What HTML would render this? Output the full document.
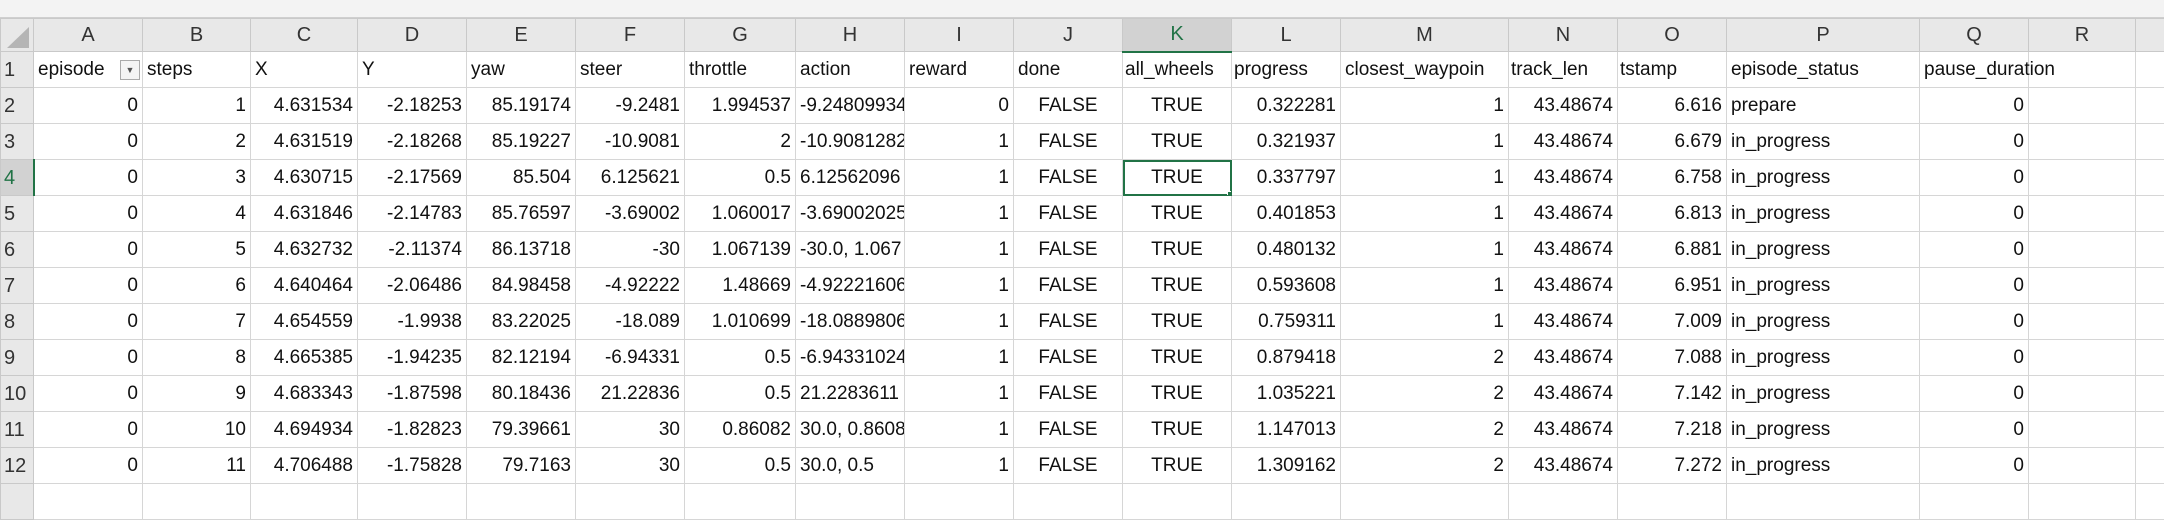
<!DOCTYPE html>
<html><head><meta charset="utf-8"><style>
html,body{margin:0;padding:0;width:2164px;height:490px;overflow:hidden;background:#fff;font-family:"Liberation Sans","Noto Sans CJK JP",sans-serif;}
.top{position:absolute;left:0;top:0;width:2164px;height:18px;background:#f3f3f3;border-bottom:1px solid #cfcfcf;box-sizing:border-box}
table{position:absolute;left:0;top:18px;width:2164px;border-collapse:collapse;table-layout:fixed;font-size:19px;color:#111}
td{border:1px solid #d6d6d6;height:36px;padding:0 4px;white-space:nowrap;overflow:hidden;box-sizing:border-box;text-align:right;line-height:34px}
tr.h td{background:#e8e8e8;height:33px;text-align:center;font-size:20px;color:#333;border-color:#c9c9c9;line-height:31px}
td.n{background:#e8e8e8;text-align:left;padding-left:3px;font-size:20px;color:#333;border-color:#c9c9c9}
td.l{text-align:left}
td.c{text-align:center}
td.v{overflow:visible}
.sel{outline:2px solid #217346;outline-offset:-2px;position:relative}
</style></head><body>
<div class="top"></div>
<table>
<colgroup>
<col style="width:33px"><col style="width:109px"><col style="width:108px"><col style="width:107px"><col style="width:109px"><col style="width:109px"><col style="width:109px"><col style="width:111px"><col style="width:109px"><col style="width:109px"><col style="width:109px"><col style="width:109px"><col style="width:109px"><col style="width:168px"><col style="width:109px"><col style="width:109px"><col style="width:193px"><col style="width:109px"><col style="width:107px"><col style="width:29px">
</colgroup>
<tr class="h"><td style="position:relative;padding:0"><svg width="33" height="33" style="position:absolute;left:0;top:0"><polygon points="28,8 28,29 6,29" fill="#b5b5b5"/></svg></td><td>A</td><td>B</td><td>C</td><td>D</td><td>E</td><td>F</td><td>G</td><td>H</td><td>I</td><td>J</td><td style="background:#d2d2d2;color:#217346;border-bottom:2px solid #217346">K</td><td>L</td><td>M</td><td>N</td><td>O</td><td>P</td><td>Q</td><td>R</td><td style="border-right:none"></td></tr>
<tr><td class="n">1</td><td class="l" style="position:relative">episode<span style="position:absolute;right:2px;top:8px;width:20px;height:20px;border:1px solid #aaa;background:#f4f4f4;box-sizing:border-box;font-size:9px;line-height:18px;text-align:center;color:#555">▼</span></td><td class="l">steps</td><td class="l">X</td><td class="l">Y</td><td class="l">yaw</td><td class="l">steer</td><td class="l">throttle</td><td class="l">action</td><td class="l">reward</td><td class="l">done</td><td class="l" style="padding-left:2px">all_wheels</td><td class="l" style="padding-left:2px">progress</td><td class="l">closest_waypoin</td><td class="l" style="padding-left:2px">track_len</td><td class="l" style="padding-left:2px">tstamp</td><td class="l">episode_status</td><td class="l v">pause_duration</td><td></td><td></td></tr>
<tr><td class="n">2</td><td>0</td><td>1</td><td>4.631534</td><td>-2.18253</td><td>85.19174</td><td>-9.2481</td><td>1.994537</td><td class="l">-9.24809934</td><td>0</td><td class="c">FALSE</td><td class="c">TRUE</td><td>0.322281</td><td>1</td><td>43.48674</td><td>6.616</td><td class="l">prepare</td><td>0</td><td></td><td></td></tr>
<tr><td class="n">3</td><td>0</td><td>2</td><td>4.631519</td><td>-2.18268</td><td>85.19227</td><td>-10.9081</td><td>2</td><td class="l">-10.9081282</td><td>1</td><td class="c">FALSE</td><td class="c">TRUE</td><td>0.321937</td><td>1</td><td>43.48674</td><td>6.679</td><td class="l">in_progress</td><td>0</td><td></td><td></td></tr>
<tr><td class="n" style="color:#217346;background:#d2d2d2;border-right:2px solid #217346">4</td><td>0</td><td>3</td><td>4.630715</td><td>-2.17569</td><td>85.504</td><td>6.125621</td><td>0.5</td><td class="l">6.12562096</td><td>1</td><td class="c">FALSE</td><td class="c sel">TRUE<span style="position:absolute;right:-4px;bottom:-4px;width:6px;height:6px;background:#217346;border:1px solid #fff"></span></td><td>0.337797</td><td>1</td><td>43.48674</td><td>6.758</td><td class="l">in_progress</td><td>0</td><td></td><td></td></tr>
<tr><td class="n">5</td><td>0</td><td>4</td><td>4.631846</td><td>-2.14783</td><td>85.76597</td><td>-3.69002</td><td>1.060017</td><td class="l">-3.69002025</td><td>1</td><td class="c">FALSE</td><td class="c">TRUE</td><td>0.401853</td><td>1</td><td>43.48674</td><td>6.813</td><td class="l">in_progress</td><td>0</td><td></td><td></td></tr>
<tr><td class="n">6</td><td>0</td><td>5</td><td>4.632732</td><td>-2.11374</td><td>86.13718</td><td>-30</td><td>1.067139</td><td class="l">-30.0, 1.067</td><td>1</td><td class="c">FALSE</td><td class="c">TRUE</td><td>0.480132</td><td>1</td><td>43.48674</td><td>6.881</td><td class="l">in_progress</td><td>0</td><td></td><td></td></tr>
<tr><td class="n">7</td><td>0</td><td>6</td><td>4.640464</td><td>-2.06486</td><td>84.98458</td><td>-4.92222</td><td>1.48669</td><td class="l">-4.92221606</td><td>1</td><td class="c">FALSE</td><td class="c">TRUE</td><td>0.593608</td><td>1</td><td>43.48674</td><td>6.951</td><td class="l">in_progress</td><td>0</td><td></td><td></td></tr>
<tr><td class="n">8</td><td>0</td><td>7</td><td>4.654559</td><td>-1.9938</td><td>83.22025</td><td>-18.089</td><td>1.010699</td><td class="l">-18.0889806</td><td>1</td><td class="c">FALSE</td><td class="c">TRUE</td><td>0.759311</td><td>1</td><td>43.48674</td><td>7.009</td><td class="l">in_progress</td><td>0</td><td></td><td></td></tr>
<tr><td class="n">9</td><td>0</td><td>8</td><td>4.665385</td><td>-1.94235</td><td>82.12194</td><td>-6.94331</td><td>0.5</td><td class="l">-6.94331024</td><td>1</td><td class="c">FALSE</td><td class="c">TRUE</td><td>0.879418</td><td>2</td><td>43.48674</td><td>7.088</td><td class="l">in_progress</td><td>0</td><td></td><td></td></tr>
<tr><td class="n">10</td><td>0</td><td>9</td><td>4.683343</td><td>-1.87598</td><td>80.18436</td><td>21.22836</td><td>0.5</td><td class="l">21.2283611</td><td>1</td><td class="c">FALSE</td><td class="c">TRUE</td><td>1.035221</td><td>2</td><td>43.48674</td><td>7.142</td><td class="l">in_progress</td><td>0</td><td></td><td></td></tr>
<tr><td class="n">11</td><td>0</td><td>10</td><td>4.694934</td><td>-1.82823</td><td>79.39661</td><td>30</td><td>0.86082</td><td class="l">30.0, 0.8608</td><td>1</td><td class="c">FALSE</td><td class="c">TRUE</td><td>1.147013</td><td>2</td><td>43.48674</td><td>7.218</td><td class="l">in_progress</td><td>0</td><td></td><td></td></tr>
<tr><td class="n">12</td><td>0</td><td>11</td><td>4.706488</td><td>-1.75828</td><td>79.7163</td><td>30</td><td>0.5</td><td class="l">30.0, 0.5</td><td>1</td><td class="c">FALSE</td><td class="c">TRUE</td><td>1.309162</td><td>2</td><td>43.48674</td><td>7.272</td><td class="l">in_progress</td><td>0</td><td></td><td></td></tr>
<tr><td class="n"></td><td></td><td></td><td></td><td></td><td></td><td></td><td></td><td></td><td></td><td></td><td></td><td></td><td></td><td></td><td></td><td></td><td></td><td></td><td></td></tr>
</table>
</body></html>
